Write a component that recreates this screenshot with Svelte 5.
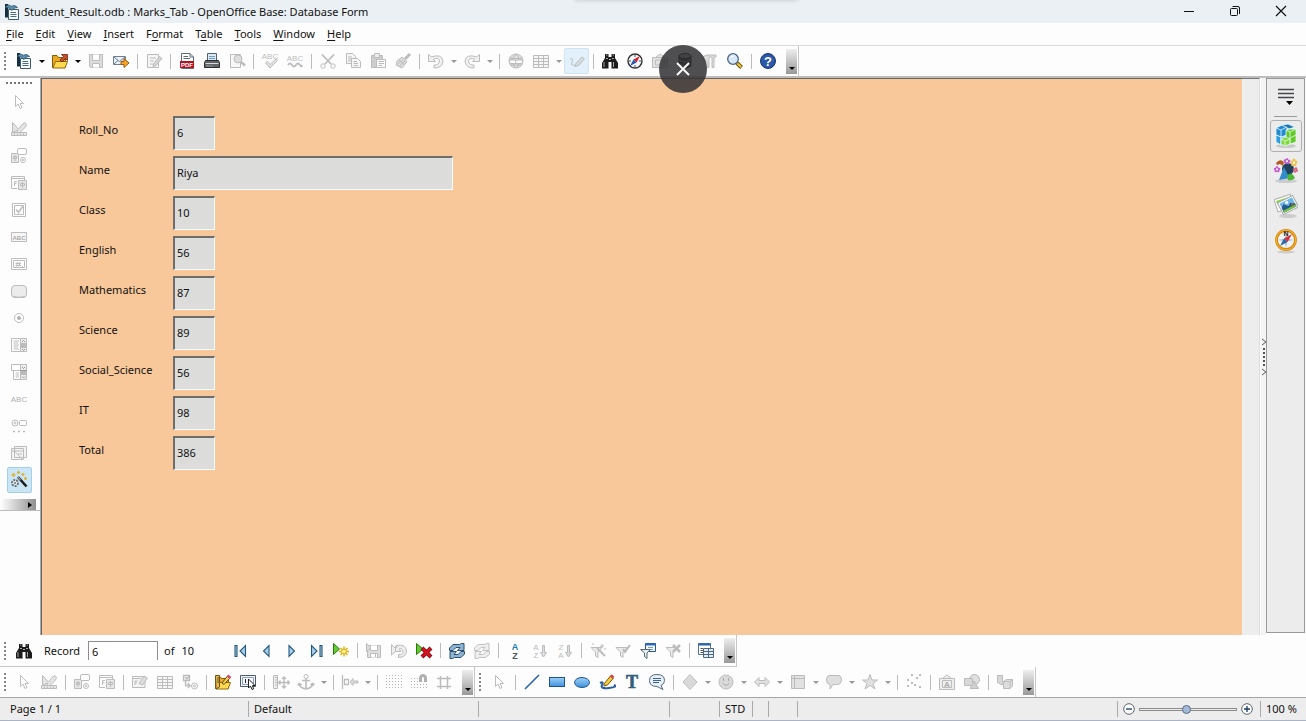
<script>
  const G = '#bcbcbc';
  const gray = (inner) => `<g fill="none" stroke="${G}">${inner}</g>`;
  const funnel = '<path d="M2 5.500H13L9 10V15.500L6.500 14V10Z" fill="#ececec"/>';
  const floppy = '<path d="M3.500 3.500H15.500V15.500H2.500V4.500Z" fill="#ddd"/><path d="M5.500 3.500V8.500H12.500V3.500M5.500 15.500V11.500H12.500V15.500M10.500 12V15" fill="#fff"/>';
  const binoculars =
    '<path d="M4 2h3.500v3h3V2H14v4l3 5v5.500h-6.500V10h-3v6.500H1V11l3-5z" fill="#1c1c1c"/><path d="M5 3h1.500M11.500 3H13M5 6.500H7M11 6.500H13M3 10v5M12.500 10v5" stroke="#a5a5a5" fill="none"/><path d="M8 7.500h2" stroke="#aaa"/>';
  const pointer = gray('<path d="M5.500 2.500V13.500L8 11L10 15.500L12 14.500L10 10.500H13.500Z" fill="#fff"/>');
  const designMode = gray('<path d="M2.500 12.500V2.500L8.500 9L12 4.500L15 2.500L16.500 4.500L15.500 7L10 12.500L6.500 13.500L7.500 10Z" fill="#e4e4e4"/><path d="M1.500 12.500H16.500V15.500H1.500ZM4.500 13.500V15M7.500 13.500V15M10.500 13.500V15M13.500 13.500V15" fill="#e5e5e5"/>');
  const control = gray('<path d="M1.500 6.500H8.500V15.500H1.500ZM5 8V14M3.500 9.500H6.500V11.500H3.500Z" fill="#e6e6e6"/><rect x="7.500" y="1.500" width="9" height="6" rx="1.500" fill="#fff"/><circle cx="13" cy="13" r="2.500"/><circle cx="13" cy="13" r=".7"/>');
  const formProps = gray('<path d="M1.500 2.500H14.500V6M1.500 2.500V14.500H7M1.500 4.500H14.500M4.500 12V7.500H7M4.500 9.500H6.500" fill="none"/><path d="M8.500 6.500H16.500V15.500H8.500ZM12.500 8V14M10.500 9.500H14.500V11.500H10.500Z" fill="#e6e6e6"/>');
  const table = gray('<path d="M1.500 3.500H16.500V15.500H1.500Z" fill="#f6f6f6"/><path d="M1.500 6.500H16.500M1.500 9.500H16.500M1.500 12.500H16.500M6.500 3.500V15.500M11.500 3.500V15.500"/>');
  const writerDoc =
    '<path d="M3.500 1V14.500" stroke="#17303f" stroke-width="3"/><path d="M5 2H12V6H5Z" fill="#c2d3de"/><path d="M5.500 6.500H15.500V16.500H5.500Z" fill="#f6fafc" stroke="#3f5a6c"/><path d="M2.500 4Q6 0 8.500 4Q11 1 14.500 4.500Q10.500 4 9 7.500Q6.500 4 2.500 4.500Z" fill="#5f93b0" stroke="#2a5269" stroke-width=".8"/><path d="M7.500 9.500H13M7.500 11.500H13.500M7.500 13.500H13.500" stroke="#4a6b83"/>';
  const folderBody = '<path d="M1.500 3.500H6L7.500 5.500H14.500V15.500H1.500Z" fill="#e9a823" stroke="#855b08"/><path d="M4.500 9.500H16.500L14 16H2Z" fill="#ffd94f" stroke="#94690a"/>';
  const oldArrow = (flip) => `<g fill="#f1f1f1" stroke="${G}" ${flip ? 'transform="translate(18 0) scale(-1 1)"' : ''}><path d="M1.500 2.500V9.500H8.500L6.300 7.300Q12 5 12.500 9Q12 13.500 7 13V16Q15.500 16 16 9Q15 1.500 4.200 4.900Z"/></g>`;
  const tri = (d) => `<path d="${d}" fill="#a9cdea" stroke="#23587c" stroke-width="1.100"/>`;
  const refresh = (f, s) => `<path d="M1.500 8.500V6L5 2.500H11.500L13.500 1.500H16V8.500H9.500L12 5.500H8L5 8.500Z" fill="${f}" stroke="${s}"/><path d="M16.500 9.500V12L13 15.500H6.500L4.500 16.500H2V9.500H8.500L6 12.500H10L13 9.500Z" fill="${f}" stroke="${s}"/>`;
  const word = (x, y, size, t, fill = G, weight = 700) => `<text x="${x}" y="${y}" font-family="Liberation Sans, sans-serif" font-size="${size}" font-weight="${weight}" text-anchor="middle" fill="${fill}">${t}</text>`;
  const downArrow = gray('<path d="M11.500 3.500V10.500H9.500L12.500 15L15.500 10.500H13.500V3.500Z" fill="#ddd"/>');

  const icons = {
    writerDoc,
    open: folderBody + '<path d="M9 8L12.500 4.500L10.500 2.500H16.500V8.500L14.500 6.500L11 10Z" fill="#c8502a" stroke="#6d200c" stroke-width=".8"/>',
    save: gray('<path d="M2.500 2.500H15.500V15.500H3.500L2.500 14.500Z" fill="#dcdcdc"/><path d="M5.500 2.500V8.500H12.500V2.500M5.500 15.500V11.500H12.500V15.500" fill="#fff"/>'),
    mail: '<path d="M1.500 4.500H13.500V12.500H1.500Z" fill="#e9f1f8" stroke="#6d7f90"/><path d="M2 5L7.500 9.500L13 5M2 12L6 8.500" fill="none" stroke="#6d7f90"/><path d="M9 9.500H12V6.500L17 11L12 15.500V12.500H9Z" fill="#f5a52a" stroke="#9c5b0c"/>',
    edit: gray('<path d="M2.500 2.500H13.500V15.500H2.500ZM5 6H11M5 9H9M5 12H8" fill="#f5f5f5"/><path d="M8.500 12L14.500 4.500L17 6.500L11 13.500L8 14.500Z" fill="#d5d5d5"/>'),
    pdf: '<path d="M3.500 1.500H12L15.500 5V16.500H3.500Z" fill="#fff" stroke="#5c6e7c"/><path d="M12 1.500V5H15.500M5.500 4.500H10M5.500 6.500H12" stroke="#5c6e7c" fill="none"/><rect x="2" y="9" width="14" height="7" fill="#b51222"/>' + word(9, 15, 6, 'PDF', '#fff'),
    print: '<path d="M4.500 1.500H13.500V9H4.500Z" fill="#dfeaf5" stroke="#4c6175"/><path d="M6 4.500H12M6 6.500H12" stroke="#6f9cc4"/><path d="M2.500 8.500H15.500L16.500 11V15.500H1.500V11Z" fill="#5f6569" stroke="#2b2b2b"/><path d="M2.500 11.500H15.500" stroke="#d7dadc"/><path d="M3 14H10" stroke="#999"/>',
    preview: gray('<path d="M2.500 2.500H12.500V15.500H2.500Z" fill="#f8f8f8"/><circle cx="10" cy="7" r="4" fill="#dedede"/><path d="M13 10L17 13.500" stroke-width="2.500"/>'),
    spell: word(9, 7, 8, 'ABC', G, 400) + gray('<path d="M4.500 11L6.500 9.500L9 12.500L15 7L16.500 8.500L9 16Z" fill="#e2e2e2"/>'),
    autospell: word(9, 9, 8, 'ABC', G, 400) + gray('<path d="M2 13Q4 10 6 13T10 13T14 13T16 13" stroke-width="1.800"/>'),
    cut: gray('<path d="M3 2.500L12 12M15 2.500L6 12" stroke-width="1.800"/><circle cx="4" cy="14" r="2.200"/><circle cx="14" cy="14" r="2.200"/>'),
    copy: gray('<path d="M2.500 1.500H8.500L11.500 4.500V11.500H2.500ZM4 5H8M4 7H9M4 9H7" fill="#f6f6f6"/><path d="M7.500 6.500H13.500L16.500 9.500V15.500H7.500ZM9.500 9.500H13M9.500 11.500H14M9.500 13.500H14" fill="#f6f6f6"/>'),
    paste: gray('<path d="M2.500 3.500H13.500V15.500H2.500Z" fill="#cdcdcd"/><path d="M5.500 1.500H10.500V5.500H5.500Z" fill="#eee"/><path d="M7.500 7.500H16.500V15.500H7.500ZM9.500 9.500H15M9.500 11.500H15M9.500 13.500H13" fill="#fafafa"/>'),
    brush: gray('<path d="M16 2L11 7" stroke-width="3"/><path d="M3 9L8 5L13 9.500L8 16L2 13Z" fill="#dcdcdc"/><path d="M5 8L11 13M3.500 12L9 8M5.500 14L11 9"/>'),
    undo: oldArrow(false),
    redo: oldArrow(true),
    link: gray('<circle cx="9" cy="9" r="7" fill="#dedede"/><path d="M2 6.500H16M3 13H15M9 2Q3 7 8 16M9 2Q15 7 10 16"/><rect x="2.500" y="8" width="7" height="3.500" rx="1.500" fill="#fff"/><rect x="8.500" y="8" width="7" height="3.500" rx="1.500" fill="#fff"/>'),
    table,
    draw: gray('<path d="M2 7Q6 5.500 4 10T9 13" /><path d="M7.500 12L14 5L16.500 7L10.500 13.500L7 14.500Z" fill="#d5dce0"/>'),
    binoculars,
    compass: '<circle cx="9" cy="9" r="7" fill="#f4f7fa" stroke="#333" stroke-width="1.400"/><path d="M9 3V5M9 13V15M3 9H5M13 9H15" stroke="#555"/><path d="M14 4L10.500 10.500L7.500 7.500Z" fill="#cf202b"/><path d="M4 14L10.500 10.500L7.500 7.500Z" fill="#2357b5"/>',
    gallery: gray('<path d="M1.500 5.500H16.500V15.500H1.500ZM4.500 8H13.500V13H4.500ZM5 5L9 2L13 5" fill="#e3e3e3"/>'),
    database: '<g stroke="#000"><path d="M3 4V14Q9 18 15 14V4" fill="#222"/><ellipse cx="9" cy="4" rx="6" ry="2.500" fill="#aaa"/><path d="M3.500 8Q9 12 14.500 8M3.500 12Q9 16 14.500 12" fill="none" stroke="#bbb"/></g>',
    pilcrow: gray('<path d="M15 3H6Q2 3.500 2 6.500T6 10V15.500H8V5H11V15.500H13V5H15Z" fill="#ddd"/>'),
    zoom: '<path d="M11 11L15.500 15.500" stroke="#6f5510" stroke-width="4"/><path d="M11.500 11.500L15 15" stroke="#f2ca3c" stroke-width="2"/><circle cx="7" cy="7" r="5.300" fill="#d7e9f8" stroke="#4d6480" stroke-width="1.300"/><path d="M4 6Q5 4 8 4" stroke="#fff" fill="none"/>',
    help: '<circle cx="9" cy="9" r="7.500" fill="#2c58a8" stroke="#173675"/>' + word(9, 14, 13, '?', '#fff'),
    pointer, designMode, control, formProps,
    check: gray('<path d="M2.500 2.500H15.500V15.500H2.500Z" fill="#fff"/><path d="M4.500 4.500H13.500V13.500H4.500Z"/><path d="M6 8.500L8.500 11.500L13 5" stroke-width="1.600"/>'),
    textbox: gray('<path d="M1.500 4.500H16.500V13.500H1.500Z" fill="#f6f6f6"/>') + word(9, 12, 6, 'ABC', '#aaa'),
    formatted: gray('<path d="M1.500 3.500H16.500V14.500H1.500Z" fill="#fff"/><path d="M3.500 5.500H14.500V12.500H3.500ZM7.500 7L6.500 11.500M10 7L9 11.500M5.500 8.500H11M5.500 10.500H11M12 11.500H13"/>'),
    pushbutton: gray('<rect x="1.500" y="3.500" width="15" height="12" rx="3.500" fill="#ececec"/><path d="M3 14.500Q9 16 15 14.500"/>'),
    radio: gray('<circle cx="9" cy="9" r="4.500" fill="#fff"/>') + '<circle cx="9" cy="9" r="2" fill="#b2b2b2"/>',
    listbox: gray('<path d="M1.500 2.500H11.500V15.500H1.500ZM3.500 5H9M3.500 7H8M3.500 9H9M3.500 11H8M3.500 13H9" fill="#fff"/><path d="M10.500 2.500H16.500V15.500H10.500Z" fill="#ededed"/><rect x="11" y="7" width="5" height="5" fill="#bbb" stroke="none"/><path d="M12 6L13.500 4.500L15 6M12 13L13.500 14.500L15 13" stroke="#999"/>'),
    combobox: gray('<path d="M1.500 1.500H11.500V7.500H1.500ZM3.500 7.500H11.500V16.500H3.500ZM5.500 10H9M5.500 12H9M5.500 14H9" fill="#fff"/><path d="M10.500 1.500H16.500V16.500H10.500Z" fill="#ededed"/><rect x="11" y="8" width="5" height="4" fill="#bbb" stroke="none"/><path d="M10.500 7.500H16.500M12 4L13.500 5.500L15 4M12 13.500L13.500 15L15 13.500" stroke="#999"/>'),
    label: word(9, 12, 8, 'ABC', '#b0b0b0', 400),
    more: gray('<circle cx="5" cy="6" r="3"/><circle cx="5" cy="6" r="1"/><rect x="9.500" y="3.500" width="7" height="5" rx="1"/><path d="M3 14.500H5M8 14.500H10M13 14.500H15" stroke-width="1.500"/>'),
    moreForm: gray('<path d="M4.500 2.500H16.500V13.500H4.500ZM1.500 4.500H13.500V15.500H1.500ZM1.500 7H13.500M3.500 6L12.500 15.500M8 10H12" fill="#f4f4f4"/>'),
    wizard: '<path d="M8 6L16.500 15.500" stroke="#1c1c1c" stroke-width="2.600"/><path d="M8 6L10.500 9" stroke="#999" stroke-width="1.300"/><circle cx="5" cy="12" r="3" fill="#eee" stroke="#61727c" stroke-width="2" stroke-dasharray="2 1"/><circle cx="5" cy="12" r="1" fill="#61727c"/><path d="M3.500 2V6M1.500 4H5.500M8.500 0V3M7 1.500H10M13 2V5M11.500 3.500H14.500M15.500 6V9M14 7.500H17" stroke="#dfb22a" stroke-width="1.400"/>',
    first: tri('M3 3.500H5V14.500H3Z') + tri('M13.500 3.500V14.500L8 9Z'),
    prev: tri('M12 3.500V14.500L6.500 9Z'),
    next: tri('M7 3.500V14.500L12.500 9Z'),
    last: tri('M4.500 3.500V14.500L10 9Z') + tri('M13 3.500H15V14.500H13Z'),
    addRecord: '<path d="M1.500 1.500V12.500L7.500 7Z" fill="#62cb2f" stroke="#287b0b"/><path d="M12 4.500V14.500M7 9.500H17M8.500 6L15.500 13M15.500 6L8.500 13" stroke="#e3b516" stroke-width="1.500"/><circle cx="12" cy="9.500" r="2.500" fill="#fff08a" stroke="#dcae12"/>',
    saveRecord: gray(floppy + '<path d="M1.500 1.500V9.500L6 5.500Z" fill="#ddd"/>'),
    undoRecord: gray('<path d="M1.500 2.500V13L7 8Z" fill="#eee"/><path d="M6 3.500Q16 1.500 16.500 9Q16 15.500 8.500 15.500V12.500Q13 13 13 9Q12 5.500 9 7L11 9.500H5.500V4.500L7 5.500Z" fill="#ededed"/>'),
    deleteRecord: '<path d="M1.500 1.500V12.500L8 7Z" fill="#62cb2f" stroke="#287b0b"/><path d="M7 6L16 15M16 6L7 15" stroke="#7e0710" stroke-width="4"/><path d="M7.500 6.500L15.500 14.500M15.500 6.500L7.500 14.500" stroke="#d31420" stroke-width="2.500"/>',
    refresh: refresh('#8db3d1', '#294f6c'),
    refreshControl: refresh('#eee', '#c2c2c2'),
    sort: word(9, 8, 9, 'A', '#1681b0') + word(9, 17, 9, 'Z', '#4e5565'),
    sortAsc: word(5, 8, 8, 'A', G, 400) + word(5, 16, 8, 'Z', G, 400) + downArrow,
    sortDesc: word(5, 8, 8, 'Z', G, 400) + word(5, 16, 8, 'A', G, 400) + downArrow,
    autofilter: gray(funnel + '<path d="M8 6L16 14" stroke-width="2"/><path d="M13 2V6M11 4H15M4 1V3M15 7H17"/>'),
    applyFilter: gray(funnel + '<path d="M9 7L11 10L16 3" stroke-width="2"/>'),
    formFilter: '<path d="M6.500 1.500H16.500V9.500H6.500Z" fill="#f5f9ff" stroke="#1f5793"/><path d="M6.500 2.500H16.500" stroke="#2d6fba" stroke-width="2"/><path d="M9 5.500H14M9 7.500H14" stroke="#7c9fb8"/><path d="M1.500 7.500H11.500L8 11V16.500L5.500 14.500V11Z" fill="#e6ebee" stroke="#586a75"/>',
    removeFilter: gray(funnel + '<path d="M9 3L16 10M16 3L9 10" stroke-width="2.500"/>'),
    dataSource: '<path d="M1.500 1.500H13.500V12.500H1.500Z" fill="#fff" stroke="#4d7395"/><path d="M1.500 2.500H13.500" stroke="#2864b4" stroke-width="2"/><path d="M3.500 6.500H6M3.500 8.500H6M3.500 10.500H6" stroke="#555"/><path d="M6.500 6.500H16.500V15.500H6.500ZM6.500 9.500H16.500M6.500 12.500H16.500M11.500 6.500V15.500" fill="#dfebf5" stroke="#51677c"/>',
    formNav: gray('<path d="M1.500 3.500H14V14.500H1.500ZM1.500 5.500H10M4 12V8H7M4 10H6" fill="#f4f4f4"/><path d="M8 10.500L13 3L16.500 5L11.500 12Z" fill="#ddd"/>'),
    tabOrder: gray('<path d="M2.500 2.500H8.500V7.500H2.500ZM4 4L6 6L9 2M4.500 8V12.500H9L7 10M9 12.500L7 15" fill="#f4f4f4" stroke-width="1.300"/><circle cx="13.500" cy="13" r="3"/><circle cx="13.500" cy="13" r="1"/>'),
    openDesign: folderBody + '<path d="M1.500 2.500H5.500V14L2 16Z" fill="#e8bd50" stroke="#6b5214"/><path d="M3 5H5M3 7H5M3 9H5" stroke="#69541d"/><path d="M8 10L13.500 3L16 5L10 11.500Z" fill="#f4d24e" stroke="#604b18"/><path d="M13.500 2.500L16.500 5" stroke="#d44a72" stroke-width="2.500"/>',
    focus: '<path d="M1.500 2.500H16.500V13.500H1.500Z" fill="#f3f7fc" stroke="#4c5a68"/><path d="M3.500 4.500H14.500V11.500H3.500Z" fill="none" stroke="#8ba0b8"/><path d="M6.500 6V10" stroke="#222"/><path d="M9.500 6V15L11.500 13L13 16.500L14.500 16L13.500 12.500H16Z" fill="#fff" stroke="#222"/>',
    position: gray('<path d="M1.500 2.500H5.500V15.500H1.500ZM3 4.500H5M3 7H5M3 9.500H5M3 12H5" fill="#eee"/><path d="M12 4V15M7 9.500H17M10 6L12 4L14 6M10 13L12 15L14 13M8.500 7.500L6.500 9.500L8.500 11.500M15.500 7.500L17.500 9.500L15.500 11.500" stroke-width="1.400"/>'),
    anchor: gray('<circle cx="9" cy="3.500" r="2"/><path d="M9 5.500V15M5 7.500H13M2 10Q2.500 15 9 16Q15.500 15 16 10M2 10L1 12.500M2 10L4.500 12M16 10L17 12.500M16 10L13.500 12" stroke-width="1.600"/>'),
    align: gray('<path d="M1.500 2V16M3.500 6.500H7.500V11.500H3.500Z" stroke-width="1.300"/><path d="M9 9L12 5.500V8H17V10H12V12.500Z" fill="#ddd"/>'),
    grid: '<path d="M1 2.500H17M1 5.500H17M1 8.500H17M1 11.500H17M1 14.500H17" stroke="#b4b4b4" stroke-dasharray="1 2"/>',
    snap: '<path d="M1 5.500H9M1 8.500H9M1 11.500H17M1 14.500H17" stroke="#b4b4b4" stroke-dasharray="1 2"/><path d="M10.500 9V5Q11 2.500 13 2.500T15.500 5V9" fill="none" stroke="#b0b0b0" stroke-width="3"/>',
    guides: gray('<path d="M2 5.500H16M2 13.500H16M5.500 3V16M12.500 3V16" stroke-width="1.500"/>'),
    line: '<path d="M2 16L16 2" stroke="#2a66ae" stroke-width="1.600"/>',
    rect: '<defs><linearGradient id="blueA" x2="0" y2="1"><stop stop-color="#9ed0f5"/><stop offset="1" stop-color="#3f91dc"/></linearGradient></defs><rect x="1.500" y="4.500" width="15" height="9" fill="url(#blueA)" stroke="#1e558e"/>',
    ellipse: '<defs><linearGradient id="blueB" x2="0" y2="1"><stop stop-color="#9ed0f5"/><stop offset="1" stop-color="#3f91dc"/></linearGradient></defs><ellipse cx="9" cy="9.500" rx="7.500" ry="5" fill="url(#blueB)" stroke="#1e558e"/>',
    freeform: '<path d="M2 10Q6 8 4 12T11 15T16 12" fill="none" stroke="#285f9d" stroke-width="2"/><path d="M6 11L12.500 3L15.500 5L9.500 12L6 13Z" fill="#f7cf3f" stroke="#79530c"/><path d="M12.500 2.500L15.500 4.500" stroke="#cd4b4b" stroke-width="3"/>',
    text: '<text x="9" y="15" font-family="Liberation Serif, serif" font-size="18" font-weight="700" text-anchor="middle" fill="#2f607c" stroke="#2f607c" stroke-width=".6">T</text>',
    callout: '<path d="M9 1.500Q16.500 1.500 16.500 7.500Q16.500 11 13 12.500L15 16.500L9 13.500Q1.500 13.500 1.500 7.500T9 1.500Z" fill="#e8f0f6" stroke="#516b82"/><path d="M5 5.500H13M5 7.500H13M5 9.500H11" stroke="#3f6390"/>',
    diamond: gray('<path d="M9 1.500L16 9L9 16.500L2 9Z" fill="#d9d9d9"/>'),
    smile: gray('<circle cx="9" cy="9" r="7" fill="#dadada"/><path d="M5.500 10Q9 14.500 12.500 10M6.500 5V8M11.500 5V8" stroke="#aaa"/>'),
    arrows: gray('<path d="M1.500 9L6 4.500V7.500H12V4.500L16.500 9L12 13.500V10.500H6V13.500Z" fill="#e1e1e1"/>'),
    flowchart: gray('<path d="M2.500 2.500H15.500V15.500H2.500ZM5.500 2.500V15.500M2.500 5.500H15.500" fill="#e1e1e1"/>'),
    speech: gray('<path d="M4 2.500H14Q16.500 3 16.500 7T13 11.500H8L5 16V11.500Q1.500 11 1.500 7T4 2.500Z" fill="#dfdfdf"/>'),
    star: gray('<path d="M9 1.500L11 7H16.500L12 10.500L14 16L9 12.500L4 16L6 10.500L1.500 7H7Z" fill="#e0e0e0"/>'),
    points: gray('<path d="M2 7H4M2 13H4M6 10H8M6 2H8M9 12H11M11 5H13M14 2H16M14 14H16" stroke-width="2"/>'),
    fontwork: gray('<path d="M1.500 5.500H16.500V16.500H1.500ZM4.500 7.500H13.500V14.500H4.500ZM5 5L9 2L13 5" fill="#eee"/>') + word(9, 14, 8, 'A', '#aaa'),
    fromFile: gray('<circle cx="11.500" cy="6.500" r="5" fill="#dfdfdf"/><path d="M1.500 5.500H9.500V12.500H1.500Z" fill="#d8d8d8"/><path d="M11 8L15.500 15.500H7Z" fill="#cfcfcf"/>'),
    extrusion: gray('<path d="M1.500 2.500H6.500V9H8.500L6 12L1.500 9.500Z" fill="#d8d8d8"/><path d="M7.500 8.500L10.500 6.500H16.500V13L14 15.500H7.500ZM7.500 8.500H14V15.500M14 8.500L16.500 6.500" fill="#dedede"/>'),
  };

  const b = (icon, label, extra = {}) => ({ icon, label, ...extra });
  const sep = { sep: true };
  const arrow = true;

  const standard = [
    b('writerDoc', 'New', { arrow }), b('open', 'Open', { arrow }), b('save', 'Save'), b('mail', 'Send'), sep,
    b('edit', 'Edit file'), sep, b('pdf', 'Export as PDF'), b('print', 'Print'), b('preview', 'Page preview'), sep,
    b('spell', 'Spelling'), b('autospell', 'AutoSpellcheck'), sep,
    b('cut', 'Cut'), b('copy', 'Copy'), b('paste', 'Paste'), b('brush', 'Format paintbrush'), sep,
    b('undo', 'Undo', { arrow, dim: true }), b('redo', 'Redo', { arrow, dim: true }), sep,
    b('link', 'Hyperlink'), b('table', 'Insert table', { arrow, dim: true }), b('draw', 'Draw functions', { soft: true }), sep,
    b('binoculars', 'Find'), b('compass', 'Navigator'), b('gallery', 'Gallery'), b('database', 'Data sources'), b('pilcrow', 'Nonprinting characters'), b('zoom', 'Zoom'), sep,
    b('help', 'Help'),
  ];
  const records = [
    b('first', 'First record'), b('prev', 'Previous record'), b('next', 'Next record'), b('last', 'Last record'), b('addRecord', 'New record'), sep,
    b('saveRecord', 'Save record'), b('undoRecord', 'Undo data entry'), b('deleteRecord', 'Delete record'), sep,
    b('refresh', 'Refresh'), b('refreshControl', 'Refresh control'), sep,
    b('sort', 'Sort'), b('sortAsc', 'Sort ascending'), b('sortDesc', 'Sort descending'), sep,
    b('autofilter', 'AutoFilter'), b('applyFilter', 'Apply filter'), b('formFilter', 'Form-based filter'), b('removeFilter', 'Remove filter'), sep,
    b('dataSource', 'Data source as table'),
  ];
  const design = [
    b('pointer', 'Select'), b('designMode', 'Design mode'), sep, b('control', 'Control'), b('formProps', 'Form'), sep,
    b('formNav', 'Form navigator'), b('table', 'Add field'), b('tabOrder', 'Activation order'), sep,
    b('openDesign', 'Open in design mode'), b('focus', 'Automatic control focus'), sep,
    b('position', 'Position and size'), b('anchor', 'Change anchor', { arrow, dim: true }), sep,
    b('align', 'Alignment', { arrow, dim: true }), sep,
    b('grid', 'Display grid'), b('snap', 'Snap to grid'), b('guides', 'Guides when moving'),
  ];
  const drawing = [
    b('pointer', 'Select object'), sep,
    b('line', 'Line'), b('rect', 'Rectangle'), b('ellipse', 'Ellipse'), b('freeform', 'Freeform line'), b('text', 'Text'), b('callout', 'Callout'), sep,
    b('diamond', 'Basic shapes', { arrow, dim: true }), b('smile', 'Symbol shapes', { arrow, dim: true }), b('arrows', 'Block arrows', { arrow, dim: true }),
    b('flowchart', 'Flowcharts', { arrow, dim: true }), b('speech', 'Callouts', { arrow, dim: true }), b('star', 'Stars', { arrow, dim: true }), sep,
    b('points', 'Points'), sep, b('fontwork', 'Fontwork gallery'), b('fromFile', 'From file'), sep, b('extrusion', 'Extrusion'),
  ];
  const controls = [
    b('pointer', 'Select'), b('designMode', 'Design mode'), b('control', 'Control'), b('formProps', 'Form'), b('check', 'Check box'),
    b('textbox', 'Text box'), b('formatted', 'Formatted field'), b('pushbutton', 'Push button'), b('radio', 'Option button'), b('listbox', 'List box'),
    b('combobox', 'Combo box'), b('label', 'Label field'), b('more', 'More controls'), b('moreForm', 'Form design'), b('wizard', 'Wizards', { on: true }),
  ];

  const menus = [['', 'F', 'ile'], ['', 'E', 'dit'], ['', 'V', 'iew'], ['', 'I', 'nsert'], ['F', 'o', 'rmat'], ['T', 'a', 'ble'], ['', 'T', 'ools'], ['', 'W', 'indow'], ['', 'H', 'elp']];

  let fields = $state([
    { label: 'Roll_No', value: '6' },
    { label: 'Name', value: 'Riya', wide: true },
    { label: 'Class', value: '10' },
    { label: 'English', value: '56' },
    { label: 'Mathematics', value: '87' },
    { label: 'Science', value: '89' },
    { label: 'Social_Science', value: '56' },
    { label: 'IT', value: '98' },
    { label: 'Total', value: '386' },
  ]);
  let record = $state('6');
  let zoom = $state(48);
</script>

{#snippet icon(name)}
  <svg width="18" height="18" viewBox="0 0 18 18" aria-hidden="true">{@html icons[name]}</svg>
{/snippet}

{#snippet items(list)}
  {#each list as item}
    {#if item.sep}
      <span class="sep"></span>
    {:else}
      <button class="tool" class:soft={item.soft} class:on={item.on} aria-label={item.label}>{@render icon(item.icon)}</button>
      {#if item.arrow}
        <button class="drop" class:dim={item.dim} aria-label={item.label + ' options'}></button>
      {/if}
    {/if}
  {/each}
{/snippet}

<div class="window">
  <header class="title">
    <svg width="16" height="18" viewBox="1 0 16 18" aria-hidden="true">{@html writerDoc}</svg>
    <h1>Student_Result.odb : Marks_Tab - OpenOffice Base: Database Form</h1>
    <div class="winbtns">
      <button aria-label="Minimize"><svg width="12" height="12" viewBox="0 0 12 12"><path d="M1 6.500H11" stroke="#111" /></svg></button>
      <button aria-label="Restore"><svg width="12" height="12" viewBox="0 0 12 12"><path d="M3.500 1.500H9Q10.500 1.500 10.500 3V9" fill="none" stroke="#111" /><rect x="1.500" y="3.500" width="7" height="7" rx="1" fill="none" stroke="#111" /></svg></button>
      <button aria-label="Close"><svg width="12" height="12" viewBox="0 0 12 12"><path d="M1 1L11 11M11 1L1 11" stroke="#111" stroke-width="1.200" /></svg></button>
    </div>
    <div class="flyout"></div>
  </header>

  <nav class="menu">
    {#each menus as [pre, key, post]}<button>{pre}<u>{key}</u>{post}</button>{/each}
  </nav>

  <div class="bars top">
    <div class="bar" role="toolbar" aria-label="Standard">
      <span class="grip"></span>
      {@render items(standard)}
      <button class="overflow" aria-label="More standard tools"></button>
    </div>
  </div>

  <main>
    <div class="side">
      <div class="toolbox" role="toolbar" aria-label="Form controls">
        <span class="hgrip"></span>
        {@render items(controls)}
        <button class="moretools" aria-label="More form controls"></button>
      </div>
    </div>
    <form class="page" onsubmit={(e) => e.preventDefault()}>
      {#each fields as f, i}
        <div class="field">
          <label for={'field' + i}>{f.label}</label>
          <input id={'field' + i} class:wide={f.wide} bind:value={f.value} />
        </div>
      {/each}
    </form>
    <div class="gutter"></div>
    <button class="splitter" aria-label="Toggle sidebar">
      <svg width="6" height="38" viewBox="0 0 6 38"><path d="M1 1L5 4L1 7M1 31L5 34L1 37" fill="none" stroke="#555" /><path d="M3 10V29" stroke="#555" stroke-width="2" stroke-dasharray="2 2" /></svg>
    </button>
    <aside>
      <button class="deckmenu" aria-label="Sidebar settings">
        <svg width="18" height="18" viewBox="0 0 18 18"><path d="M1 1.500H17M1 5.500H17M1 9.500H17" stroke="#45454c" stroke-width="1.600" /><path d="M9 13H16L12.500 17Z" fill="#000" /></svg>
      </button>
      <hr />
      <button class="deck active" aria-label="Properties">
        <svg width="24" height="26" viewBox="0 0 24 26"><ellipse cx="12" cy="23" rx="10" ry="2" fill="#c9c9c9" /><g stroke="#e9f6ff" stroke-width=".8"><path d="M2 5L8 2L13 4V12L7 14L2 12Z" fill="#238bcf" /><path d="M8 2L14 1L21 4L15 6Z" fill="#1a79b9" /><path d="M2 12L7 14V22L2 19Z" fill="#2c9de0" /><path d="M7 14L12 13V20L7 22Z" fill="#53b4ea" /><path d="M12 7L16 6L22 6V19L16 21L12 19Z" fill="#63cb24" /><path d="M16 9V21M12 7L16 9L22 6M16 15L22 12" fill="none" /><path d="M7 16L12 14L16 16V21L11 23L7 21Z" fill="#7ddb32" /><path d="M7 16L11 18L16 16M11 18V23M2 5L7 7L13 4M7 7V14" fill="none" /></g></svg>
      </button>
      <button class="deck" aria-label="Styles">
        <svg width="24" height="26" viewBox="0 0 24 26"><ellipse cx="12" cy="23" rx="11" ry="2" fill="#ccc" /><circle cx="14" cy="11" r="6" fill="#20425a" /><path d="M10 9L14 17L16 20L5 22Z" fill="#318dce" /><path d="M13 18Q17 12 21 20Q18 23 14 22Z" fill="#4eb337" /><path d="M2 5Q6 0 10 4L9 8L6 6L3 7Z" fill="#b45a21" /><g fill="#c654d2"><circle cx="13" cy="1.500" r="1.300" /><circle cx="15" cy="3" r="1.300" /><circle cx="14" cy="5" r="1.300" /><circle cx="11.500" cy="4.500" r="1.300" /><circle cx="11" cy="2.500" r="1.300" /><circle cx="3" cy="9.500" r="1.300" /><circle cx="5" cy="11" r="1.300" /><circle cx="4.200" cy="13" r="1.300" /><circle cx="1.800" cy="13" r="1.300" /><circle cx="1.200" cy="11" r="1.300" /></g><g fill="#f0c14d"><circle cx="20" cy="2" r="1.500" /><circle cx="22" cy="4" r="1.500" /><circle cx="21" cy="6.500" r="1.500" /><circle cx="18.500" cy="6.500" r="1.500" /><circle cx="17.800" cy="4" r="1.500" /></g><g fill="#dc5b78"><circle cx="22" cy="10.500" r="1.200" /><circle cx="23" cy="12.500" r="1.200" /><circle cx="21" cy="13.500" r="1.200" /><circle cx="20" cy="11.500" r="1.200" /></g><g fill="#fff"><circle cx="13" cy="3.300" r="1" /><circle cx="3" cy="11.500" r="1" /><circle cx="20" cy="4.700" r="1" /></g></svg>
      </button>
      <button class="deck" aria-label="Gallery">
        <svg width="24" height="26" viewBox="0 0 24 26"><ellipse cx="14" cy="23" rx="9" ry="2" fill="#ccc" /><g transform="rotate(-18 9 10)"><rect x="1.500" y="4" width="17" height="13" fill="#fff" stroke="#b0b0b0" /><rect x="3" y="6" width="14" height="4" fill="#85d944" /></g><g transform="rotate(-27 14 12)"><rect x="5.500" y="5.500" width="17" height="13" fill="#fff" stroke="#a5a5a5" /><rect x="7" y="7" width="14" height="10" fill="#6db6e8" /><path d="M7 12L10 9L14 13L17 11L21 14V17H7Z" fill="#245b8a" /><path d="M7 15H21V17H7Z" fill="#78c63b" /><circle cx="14" cy="9" r="1.500" fill="#fff" /><path d="M18 12V15" stroke="#a2642b" stroke-width="2" /></g></svg>
      </button>
      <button class="deck" aria-label="Navigator">
        <svg width="24" height="26" viewBox="0 0 24 26"><ellipse cx="12" cy="24" rx="9" ry="1.500" fill="#ccc" /><circle cx="12" cy="12" r="9.500" fill="#eef3f7" stroke="#d8860d" stroke-width="2.800" /><circle cx="12" cy="12" r="9.800" fill="none" stroke="#f3b929" stroke-width="1" /><path d="M12 5L13.500 12L12 20L10.500 12ZM4 12L12 10.500L20 12L12 13.500Z" fill="#aebbc6" /><path d="M18 6L13.500 14L10 10.500Z" fill="#d63039" /><path d="M6 18L13.500 14L10 10.500Z" fill="#286aac" /><text x="12" y="8" text-anchor="middle" font-family="Liberation Sans, sans-serif" font-size="7" font-weight="700" fill="#222">N</text></svg>
      </button>
    </aside>
  </main>

  <div class="bars tall">
    <div class="bar under" role="toolbar" aria-label="Form navigation">
      <span class="grip"></span>
      <button class="tool" aria-label="Find record">{@render icon('binoculars')}</button>
      <label class="reclabel" for="record">Record</label>
      <input id="record" bind:value={record} />
      <span class="count"><span>of</span><span>10</span></span>
      {@render items(records)}
      <button class="overflow" aria-label="More navigation tools"></button>
    </div>
  </div>
  <div class="bars">
    <div class="bar" role="toolbar" aria-label="Form design">
      <span class="grip"></span>
      {@render items(design)}
      <button class="overflow" aria-label="More design tools"></button>
    </div>
    <div class="bar" role="toolbar" aria-label="Drawing">
      <span class="grip"></span>
      {@render items(drawing)}
      <button class="overflow" aria-label="More drawing tools"></button>
    </div>
  </div>

  <footer>
    <span class="c1">Page 1 / 1</span>
    <span class="c2">Default</span>
    <span class="c3"></span>
    <span class="c4"></span>
    <span class="c5">STD</span>
    <span class="c6"></span>
    <span class="c7"></span>
    <span class="c8"></span>
    <span class="c9">
      <button aria-label="Zoom out"><svg width="12" height="12" viewBox="0 0 12 12"><circle cx="6" cy="6" r="5.300" fill="#fff" stroke="#5a6670" /><path d="M3 6H9" stroke="#173c63" stroke-width="1.300" /></svg></button>
      <input type="range" min="0" max="100" aria-label="Zoom" bind:value={zoom} />
      <button aria-label="Zoom in"><svg width="12" height="12" viewBox="0 0 12 12"><circle cx="6" cy="6" r="5.300" fill="#fff" stroke="#5a6670" /><path d="M3 6H9M6 3V9" stroke="#173c63" stroke-width="1.300" /></svg></button>
    </span>
    <span class="c10">100 %</span>
  </footer>

  <button class="dismiss" aria-label="Dismiss">
    <svg width="14" height="14" viewBox="0 0 14 14"><path d="M1 1L13 13M13 1L1 13" stroke="#fff" stroke-width="1.800" /></svg>
  </button>
</div>

<style>
  :global(body) { margin: 0; background: #fdfdfd; }
  .window {
    position: relative;
    display: flex;
    flex-direction: column;
    min-height: 100vh;
    box-sizing: border-box;
    border-bottom: 1px solid #aab4c4;
    overflow: hidden;
    font: 11px/16px "Noto Sans", "Open Sans", sans-serif;
    color: #111;
    background: #fdfdfd;
  }
  button, input { font: inherit; color: inherit; }
  button { padding: 0; border: 0; background: none; }
  input { box-sizing: border-box; min-width: 0; border-radius: 0; outline: 0; }
  svg { display: block; flex: none; }

  .title { position: relative; display: flex; align-items: center; height: 23px; padding-left: 4px; gap: 4px; background: #ebf0f4; }
  h1 { margin: 0; flex: 1; font-size: 11px; font-weight: 400; white-space: nowrap; }
  .winbtns { display: flex; align-self: stretch; padding-right: 2px; }
  .winbtns button { display: grid; place-items: center; width: 46px; height: 21px; }
  .flyout { position: absolute; top: -4px; left: 44%; width: 17%; height: 4px; box-shadow: 0 0 4px #b9c0c6; }

  .menu { display: flex; height: 22px; padding-left: 6px; gap: 12px; border-bottom: 1px solid #d9d9d9; }
  u { text-underline-offset: 2px; }

  .bars { display: flex; height: 30px; overflow: hidden; }
  .top { border-bottom: 2px solid #bdbdbd; }
  .tall { height: 32px; }
  .bar { display: flex; align-items: center; box-sizing: border-box; border-right: 1px solid #c6c6c6; flex: none; }
  .under { border-bottom: 1px solid #c6c6c6; }
  .grip { width: 3px; height: 18px; margin: 0 4px; background: repeating-linear-gradient(#858585 0 2px, transparent 2px 4px); background-size: 2px 100%; background-repeat: no-repeat; }
  .tool { display: grid; place-items: center; flex: none; width: 25px; height: 26px; box-sizing: border-box; border-radius: 2px; }
  .soft { border: 1px solid #cfe5f3; background: #e1f0fa; }
  .on { border: 1px solid #a3cfea; background: #cae5f6; }
  .drop { width: 11px; height: 26px; flex: none; display: grid; place-items: center; }
  .drop::before { content: ""; border: 3px solid transparent; border-top-color: #000; border-bottom: 0; }
  .dim::before { border-top-color: #999; }
  .sep { width: 1px; height: 15px; margin: 0 3px 0 4px; background: #bbb; }
  .overflow { display: flex; align-items: flex-end; justify-content: center; width: 11px; height: 25px; margin: 0 1px 0 6px; padding-bottom: 4px; background: linear-gradient(#eee, #999); }
  .overflow::before { content: ""; border: 3px solid transparent; border-top-color: #000; border-bottom: 0; }

  main { display: flex; flex: 1; }
  .side { width: 40px; flex: none; border-right: 1px solid #a9a9a9; }
  .toolbox { display: flex; flex-direction: column; align-items: center; padding: 4px 2px 0 0; border-bottom: 1px solid #bbb; }
  .hgrip { width: 26px; height: 2px; margin-bottom: 5px; background: repeating-linear-gradient(90deg, #777 0 2px, transparent 2px 4px); }
  .toolbox .tool { margin-bottom: 1px; }
  .moretools { display: flex; align-items: center; justify-content: flex-end; width: 34px; height: 11px; margin-top: 5px; padding-right: 4px; background: linear-gradient(90deg, #fafafa, #8f8f8f); }
  .moretools::before { content: ""; border: 3px solid transparent; border-left: 4px solid #000; border-right: 0; }

  .page { flex: 1; display: flex; flex-direction: column; gap: 6px; padding: 37px; border: solid #666; border-width: 1px 0 0 1px; background: #f8c89a; }
  .field { display: flex; align-items: flex-start; }
  .field label { width: 94px; flex: none; line-height: 28px; }
  .field input { width: 42px; height: 34px; padding: 0 2px 2px; border: 2px solid; border-color: #6e6e6e #fff #fff #6e6e6e; border-bottom-width: 1px; border-right-width: 1px; background: #dcdcdb; }
  .field .wide { width: 280px; }
  .gutter { width: 17px; border-top: 1px solid #777; border-right: 1px solid #ddd; background: #ededed; }
  .splitter { display: grid; align-items: center; width: 6px; border-left: 1px solid #fff; background: #f4f4f4; }
  aside { display: flex; flex-direction: column; align-items: center; width: 37px; margin: 0 1px 2px 0; border: 1px solid #999; background: #ececec; }
  .deckmenu { margin-top: 9px; }
  hr { width: 23px; height: 1px; margin: 10px 0 3px; border: 0; background: #999; }
  .deck { display: grid; place-items: center; width: 32px; height: 32px; margin-bottom: 3px; box-sizing: border-box; border-radius: 3px; }
  .active { border: 1px solid #b0b0b0; }

  .reclabel { margin-left: 8px; width: 44px; }
  #record { width: 70px; height: 19px; padding: 0 3px; border: solid #8d8d8d; border-width: 1px 1px 0 1px; background: #fff; }
  .count { display: flex; gap: 7px; width: 64px; margin-left: 6px; }

  footer { display: flex; align-items: center; height: 22px; border-top: 1px solid #a5a5a5; background: #ededed; }
  footer > span { box-sizing: border-box; height: 16px; padding-left: 5px; border-right: 1px solid #aaa; white-space: nowrap; }
  .c1 { width: 249px; }
  footer > .c1 { padding-left: 10px; }
  .c2 { width: 230px; }
  .c3 { width: 191px; }
  .c4 { width: 50px; }
  .c5 { width: 33px; }
  .c6 { width: 16px; }
  .c7 { width: 29px; }
  .c8 { flex: 1; }
  .c9 { display: flex; align-items: center; width: 143px; gap: 4px; }
  .c10 { width: 45px; }
  footer > .c10 { border: 0; }
  input[type="range"] { appearance: none; width: 98px; height: 12px; margin: 0; background: none; }
  input[type="range"]::-webkit-slider-runnable-track { height: 3px; box-sizing: border-box; border: 1px solid #8b8b8b; background: #eee; }
  input[type="range"]::-webkit-slider-thumb { appearance: none; box-sizing: border-box; width: 9px; height: 9px; margin-top: -4px; border: 1px solid #5c6c83; border-radius: 50%; background: #a3b9dc; }

  .dismiss { position: absolute; top: 45px; left: 659px; display: grid; place-items: center; width: 48px; height: 48px; border-radius: 50%; background: rgb(50 50 54 / 86%); }
</style>
